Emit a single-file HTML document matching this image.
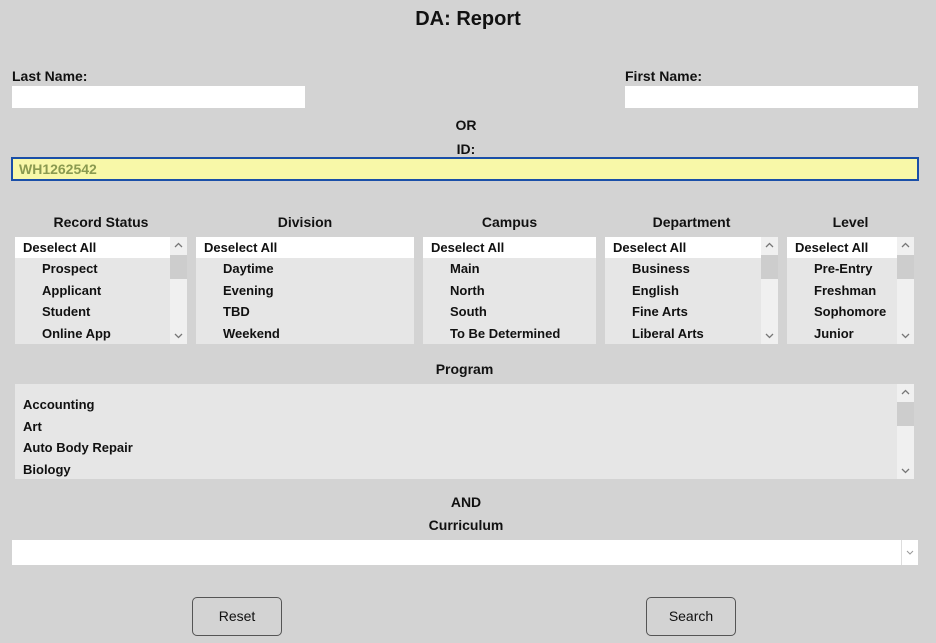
<!DOCTYPE html>
<html><head><style>
body{margin:0;width:936px;height:643px;background:#d3d3d3;font-family:"Liberation Sans",sans-serif;position:relative;overflow:hidden;color:#111}
.a{position:absolute}
.t{font-weight:bold;font-size:14px}
.in{position:absolute;background:#fff}
.box{position:absolute;background:#e6e6e6;overflow:hidden}
.box .d{background:#fff;height:21px;line-height:21px;font-weight:bold;font-size:13px;padding-left:8px}
.box .i{height:21.5px;line-height:21.5px;font-weight:bold;font-size:13px;padding-left:27px}
.sb{position:absolute;right:0;top:0;width:17px;height:100%;background:#f0f0f0}
.sb .th{position:absolute;left:0;top:18px;width:17px;height:24px;background:#cdcdcd}
.sb svg{position:absolute;left:4px}
.h{position:absolute;font-weight:bold;font-size:14px;text-align:center}
.btn{position:absolute;width:88px;height:37px;border:1px solid #555;border-radius:5px;background:#d3d3d3;font-size:14px;text-align:center;line-height:37px}
</style></head><body>
<div class="a" style="left:0;width:936px;top:8px;text-align:center;font-size:20px;font-weight:bold">DA: Report</div>
<div class="a t" style="left:12px;top:68px">Last Name:</div>
<div class="in" style="left:12px;top:86px;width:293px;height:22px"></div>
<div class="a t" style="left:625px;top:68px">First Name:</div>
<div class="in" style="left:625px;top:86px;width:293px;height:22px"></div>
<div class="h" style="left:0;width:932px;top:117px">OR</div>
<div class="h" style="left:0;width:932px;top:141px">ID:</div>
<div class="a" style="left:11px;top:157px;background:#f8f8a8;border:2px solid #1a4fa8;width:898px;height:20px;font-size:14px;line-height:20px;color:#8a9a50;padding-left:6px;font-weight:bold">WH1262542</div>

<div class="h" style="left:15px;width:172px;top:214px">Record Status</div>
<div class="h" style="left:196px;width:218px;top:214px">Division</div>
<div class="h" style="left:423px;width:173px;top:214px">Campus</div>
<div class="h" style="left:605px;width:173px;top:214px">Department</div>
<div class="h" style="left:787px;width:127px;top:214px">Level</div>

<div class="box" style="left:15px;top:237px;width:172px;height:107px"><div class="d">Deselect All</div><div class="i">Prospect</div><div class="i">Applicant</div><div class="i">Student</div><div class="i">Online App</div><div class="sb"><svg style="top:5px" width="9" height="6"><path d="M1 5L4.5 1.5L8 5" stroke="#777" fill="none" stroke-width="1.3"/></svg><div class="th"></div><svg style="bottom:5px" width="9" height="6"><path d="M1 1L4.5 4.5L8 1" stroke="#777" fill="none" stroke-width="1.3"/></svg></div></div>
<div class="box" style="left:196px;top:237px;width:218px;height:107px"><div class="d">Deselect All</div><div class="i">Daytime</div><div class="i">Evening</div><div class="i">TBD</div><div class="i">Weekend</div></div>
<div class="box" style="left:423px;top:237px;width:173px;height:107px"><div class="d">Deselect All</div><div class="i">Main</div><div class="i">North</div><div class="i">South</div><div class="i">To Be Determined</div></div>
<div class="box" style="left:605px;top:237px;width:173px;height:107px"><div class="d">Deselect All</div><div class="i">Business</div><div class="i">English</div><div class="i">Fine Arts</div><div class="i">Liberal Arts</div><div class="sb"><svg style="top:5px" width="9" height="6"><path d="M1 5L4.5 1.5L8 5" stroke="#777" fill="none" stroke-width="1.3"/></svg><div class="th"></div><svg style="bottom:5px" width="9" height="6"><path d="M1 1L4.5 4.5L8 1" stroke="#777" fill="none" stroke-width="1.3"/></svg></div></div>
<div class="box" style="left:787px;top:237px;width:127px;height:107px"><div class="d">Deselect All</div><div class="i">Pre-Entry</div><div class="i">Freshman</div><div class="i">Sophomore</div><div class="i">Junior</div><div class="sb"><svg style="top:5px" width="9" height="6"><path d="M1 5L4.5 1.5L8 5" stroke="#777" fill="none" stroke-width="1.3"/></svg><div class="th"></div><svg style="bottom:5px" width="9" height="6"><path d="M1 1L4.5 4.5L8 1" stroke="#777" fill="none" stroke-width="1.3"/></svg></div></div>

<div class="h" style="left:15px;width:899px;top:361px">Program</div>
<div class="box" style="left:15px;top:384px;width:899px;height:95px;padding-top:10px;box-sizing:border-box"><div class="i" style="padding-left:8px">Accounting</div><div class="i" style="padding-left:8px">Art</div><div class="i" style="padding-left:8px">Auto Body Repair</div><div class="i" style="padding-left:8px">Biology</div><div class="sb"><svg style="top:5px" width="9" height="6"><path d="M1 5L4.5 1.5L8 5" stroke="#777" fill="none" stroke-width="1.3"/></svg><div class="th"></div><svg style="bottom:5px" width="9" height="6"><path d="M1 1L4.5 4.5L8 1" stroke="#777" fill="none" stroke-width="1.3"/></svg></div></div>

<div class="h" style="left:0;width:932px;top:494px">AND</div>
<div class="h" style="left:0;width:932px;top:517px">Curriculum</div>
<div class="in" style="left:12px;top:540px;width:906px;height:25px"><div style="position:absolute;right:0;top:0;width:16px;height:25px;border-left:1px solid #ddd"><svg style="position:absolute;left:4px;top:10px" width="8" height="5"><path d="M1 1L4 4L7 1" stroke="#999" fill="none"/></svg></div></div>

<div class="btn" style="left:192px;top:597px">Reset</div>
<div class="btn" style="left:646px;top:597px">Search</div>
</body></html>
